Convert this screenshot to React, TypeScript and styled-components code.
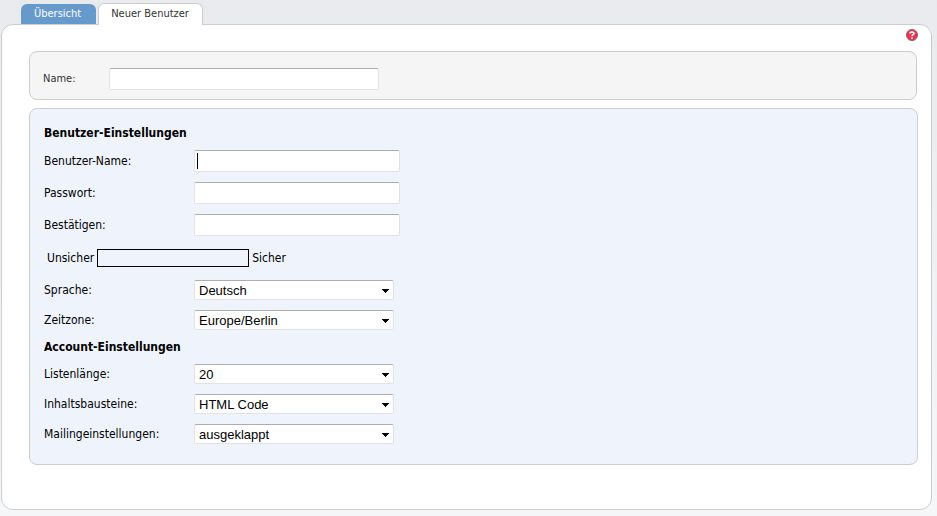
import React, { useId } from "react";
import styled, { createGlobalStyle } from "styled-components";

const GlobalStyle = createGlobalStyle`
  * { box-sizing: border-box; }
  body {
    margin: 0;
    min-height: 100vh;
    background: linear-gradient(#e9eaee, #eaebef 8%, #f5f6f8 95%);
    font-family: Tahoma, "DejaVu Sans Condensed", "Noto Sans", sans-serif;
    font-size: 12px;
    line-height: 16px;
    color: #000;
  }
`;

const Page = styled.div`
  display: flex;
  flex-direction: column;
  min-height: 100vh;
  padding: 3px 5px 6px 1px;
`;

const TabBar = styled.nav`
  display: flex;
  align-items: flex-end;
  gap: 2px;
  height: 22px;
  padding-left: 20px;
  margin-bottom: -1px;
  z-index: 1;
`;

const Tab = styled.a<{ $active?: boolean }>`
  height: ${(p) => (p.$active ? 22 : 20)}px;
  margin-bottom: ${(p) => (p.$active ? 0 : 1)}px;
  padding: ${(p) => (p.$active ? "2px 13px 0 12px" : "2px 15px 0 13px")};
  border: ${(p) => (p.$active ? "1px solid #cccdd0" : "0")};
  border-bottom: 0;
  border-radius: 6px 6px 0 0;
  background: ${(p) => (p.$active ? "#fff" : "#6699cc")};
  color: ${(p) => (p.$active ? "#333" : "#fff")};
  font-size: 11px;
  text-decoration: none;
  white-space: nowrap;
`;

const Sheet = styled.main`
  position: relative;
  flex: 1;
  display: flex;
  flex-direction: column;
  gap: 8px;
  padding: 26px 13px 44px 27px;
  border: 1px solid #cccdd0;
  border-radius: 12px;
  background: #fff;
`;

const HelpButton = styled.button`
  position: absolute;
  top: 4px;
  right: 13px;
  display: block;
  width: 12px;
  height: 12px;
  padding: 0;
  border: 0;
  background: none;
  svg { display: block; }
`;

const Panel = styled.section<{ $tone: "grey" | "blue" }>`
  padding: ${(p) => (p.$tone === "grey" ? "11px 13px 5px" : "12px 14px 15px")};
  margin-right: ${(p) => (p.$tone === "grey" ? 1 : 0)}px;
  border: 1px solid #cccdd0;
  border-radius: 8px;
  background: ${(p) => (p.$tone === "grey" ? "#f5f5f5" : "#eff4fc")};
`;

const Heading = styled.h2`
  margin: 0;
  font-size: 12px;
  line-height: 24px;
`;

const Row = styled.div<{ $height: number; $labelWidth?: number }>`
  display: grid;
  grid-template-columns: ${(p) => p.$labelWidth ?? 150}px 1fr;
  align-items: center;
  height: ${(p) => p.$height}px;
`;

const Label = styled.label<{ $small?: boolean }>`
  font-size: ${(p) => (p.$small ? 11 : 12)}px;
  color: ${(p) => (p.$small ? "#333" : "#000")};
`;

const Field = styled.div`
  position: relative;
  display: flex;
`;

const TextInput = styled.input<{ $wide?: boolean }>`
  width: ${(p) => (p.$wide ? 270 : 206)}px;
  height: 22px;
  padding: 1px 3px;
  border: 1px solid #e2e3ea;
  border-top-color: #abadb3;
  border-radius: 2px;
  background: #fff;
  font: 13px "Liberation Sans", Arial, sans-serif;
  outline: 0;
`;

const Caret = styled.span`
  position: absolute;
  top: 3px;
  left: 3px;
  width: 1px;
  height: 16px;
  background: #000;
`;

const SelectInput = styled.select`
  width: 200px;
  height: 20px;
  padding: 0 20px 0 4px;
  border: 1px solid #e2e3ea;
  border-top-color: #abadb3;
  border-radius: 2px;
  appearance: none;
  background: #fff;
  color: #000;
  font: 13px "Liberation Sans", Arial, sans-serif;
`;

const SelectWrap = styled.div`
  position: relative;
  width: 200px;
  height: 20px;
  svg {
    position: absolute;
    right: 5px;
    top: 9px;
    pointer-events: none;
  }
`;

const Strength = styled.div`
  display: flex;
  align-items: center;
  gap: 3px;
  height: 34px;
  padding-left: 3px;
`;

const StrengthBar = styled.div`
  width: 152px;
  height: 18px;
  border: 1px solid #000;
`;

function TextRow({ label, type = "text", caret }: { label: string; type?: string; caret?: boolean }) {
  const id = useId();
  return (
    <Row $height={32}>
      <Label htmlFor={id}>{label}</Label>
      <Field>
        <TextInput id={id} type={type} />
        {caret && <Caret />}
      </Field>
    </Row>
  );
}

function SelectRow({ label, value }: { label: string; value: string }) {
  const id = useId();
  return (
    <Row $height={30}>
      <Label htmlFor={id}>{label}</Label>
      <SelectWrap>
        <SelectInput id={id} defaultValue={value}>
          <option>{value}</option>
        </SelectInput>
        <svg width="7" height="4" viewBox="0 0 7 4" shapeRendering="crispEdges" aria-hidden="true">
          <path d="M0 0h7v1H6v1H5v1H4v1H3V3H2V2H1V1H0z" />
        </svg>
      </SelectWrap>
    </Row>
  );
}

export default function App() {
  return (
    <>
      <GlobalStyle />
      <Page>
        <TabBar>
          <Tab href="#overview">Übersicht</Tab>
          <Tab href="#new" $active aria-current="page">Neuer Benutzer</Tab>
        </TabBar>
        <Sheet>
          <HelpButton type="button" aria-label="Hilfe">
            <svg width="12" height="12" viewBox="0 0 12 12">
              <circle cx="6" cy="6" r="5.5" fill="#ee3350" stroke="#87606e" />
              <path d="M4 4.4C4 2.5 8 2.4 8 4.4C8 5.7 6 5.6 6 7.2" fill="none" stroke="#fff" strokeWidth="1.5" />
              <rect x="5.2" y="8.3" width="1.6" height="1.5" fill="#fff" />
            </svg>
          </HelpButton>
          <Panel $tone="grey">
            <Row $height={31} $labelWidth={66}>
              <Label htmlFor="name" $small>Name:</Label>
              <Field>
                <TextInput id="name" type="text" $wide />
              </Field>
            </Row>
          </Panel>
          <Panel $tone="blue">
            <Heading>Benutzer-Einstellungen</Heading>
            <TextRow label="Benutzer-Name:" caret />
            <TextRow label="Passwort:" type="password" />
            <TextRow label="Bestätigen:" type="password" />
            <Strength>
              <span>Unsicher</span>
              <StrengthBar role="meter" aria-label="Passwortstärke" aria-valuenow={0} />
              <span>Sicher</span>
            </Strength>
            <SelectRow label="Sprache:" value="Deutsch" />
            <SelectRow label="Zeitzone:" value="Europe/Berlin" />
            <Heading>Account-Einstellungen</Heading>
            <SelectRow label="Listenlänge:" value="20" />
            <SelectRow label="Inhaltsbausteine:" value="HTML Code" />
            <SelectRow label="Mailingeinstellungen:" value="ausgeklappt" />
          </Panel>
        </Sheet>
      </Page>
    </>
  );
}
